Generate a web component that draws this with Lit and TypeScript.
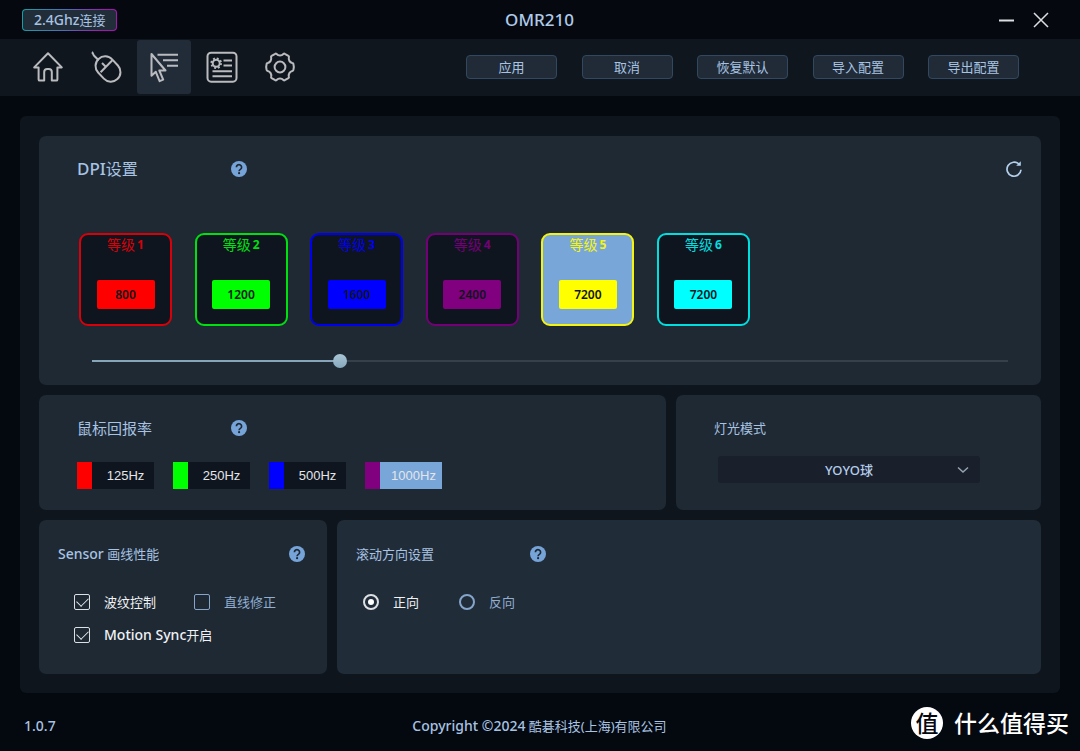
import { LitElement, html, css, svg } from "lit";
import { customElement, property, state } from "lit/decorators.js";
import { classMap } from "lit/directives/class-map.js";
import { styleMap } from "lit/directives/style-map.js";

const NAV = [
  {
    id: "home",
    label: "主页",
    icon: svg`<path d="M2.200 16.400 16 2.300l13.800 14.100h-4.400v12a1.200 1.200 0 0 1-1.200 1.200h-4.400V21a3 3 0 0 0-3-3h-1.600a3 3 0 0 0-3 3v8.600H7.800a1.200 1.200 0 0 1-1.200-1.200v-12z"/>`,
  },
  {
    id: "mouse",
    label: "鼠标",
    icon: svg`<path d="M1.800 1.200c1.500.6 1.100 2.400 2.300 3.500l4.600 4.600"/><rect x="8.400" y="4.200" width="19.200" height="27.600" rx="9.600" transform="rotate(-43 18 18)"/><path d="M10.600 21.200 22.600 9"/><path d="m12 12 4 4"/>`,
  },
  {
    id: "dpi",
    label: "DPI",
    icon: svg`<path d="M3.500 3v21.800l4.300-4 3.800 9.400 3.600-1.500-3.900-9.200h6.200z"/><path d="M9.500 3.800H30M15 9.300h15M19 14.800h11"/>`,
  },
  {
    id: "config",
    label: "配置",
    icon: svg`<rect x="1.500" y="1.700" width="29" height="29" rx="3.600"/><circle cx="10.200" cy="12.200" r="3.500"/><circle cx="10.200" cy="12.200" r="4.900" stroke-dasharray="1.900 1.950" stroke-width="1.800"/><path d="M17.500 9.600h8.500M17.500 14.600h8.500M6.500 20.300h19.500M6.500 25.300h19.500"/>`,
  },
  {
    id: "settings",
    label: "设置",
    icon: svg`<circle cx="16" cy="16" r="5.400"/><path d="M11.200 2.800c.5-.4 1-.2 1.400.2a4.600 4.600 0 0 0 6.800 0c.4-.4.9-.6 1.400-.2l3.600 2.100c.6.300.7.800.5 1.400a4.600 4.600 0 0 0 3.400 5.700c.6.100 1 .500 1.100 1.100.600 1.900.600 3.900 0 5.800-.1.600-.5 1-1.100 1.100a4.600 4.600 0 0 0-3.400 5.700c.2.600.1 1.100-.5 1.400l-3.600 2.100c-.5.4-1 .2-1.400-.2a4.600 4.600 0 0 0-6.800 0c-.4.4-.9.6-1.400.2l-3.600-2.100c-.6-.3-.7-.8-.5-1.400A4.600 4.600 0 0 0 3.700 20c-.6-.1-1-.5-1.100-1.100a9.800 9.800 0 0 1 0-5.800c.1-.6.5-1 1.100-1.100a4.600 4.600 0 0 0 3.400-5.700c-.2-.6-.1-1.100.5-1.400z"/>`,
  },
];

const LEVELS = [
  { dpi: 800, color: "#ff0000", edge: "#d80009" },
  { dpi: 1200, color: "#00ff00", edge: "#00e010" },
  { dpi: 1600, color: "#0000ff", edge: "#0000f0" },
  { dpi: 2400, color: "#800080", edge: "#740078" },
  { dpi: 7200, color: "#ffff00", edge: "#f4f410" },
  { dpi: 7200, color: "#00ffff", edge: "#00dfe0" },
];

const RATES = [
  { hz: 125, color: "#ff0000" },
  { hz: 250, color: "#00ff00" },
  { hz: 500, color: "#0000ff" },
  { hz: 1000, color: "#800080" },
];

const DPI_MIN = 100;
const DPI_MAX = 26700;

@customElement("help-button")
export class HelpButton extends LitElement {
  static styles = css`
    :host { display: flex; }
    .help { width: 16px; height: 16px; padding: 0; border: 0; background: none; cursor: pointer; }
    .glyph { display: block; width: 16px; height: 16px; }
  `;

  @property() topic = "";

  render() {
    return html`<button class="help" aria-label=${this.topic + "帮助"}>
      <svg class="glyph" viewBox="0 0 16 16" aria-hidden="true">
        <circle cx="8" cy="8" r="8" fill="#76a4d8" />
        <path d="M5.400 6.300a2.600 2.600 0 1 1 4 2.100c-.9.6-1.300.9-1.300 1.900" fill="none" stroke="#1e2934" stroke-width="1.700" />
        <circle cx="8.100" cy="12.200" r="1.100" fill="#1e2934" />
      </svg>
    </button>`;
  }
}

@customElement("app-root")
export class AppRoot extends LitElement {
  static styles = css`
    :host {
      display: flex;
      flex-direction: column;
      min-height: 100vh;
      box-sizing: border-box;
      background: #04080f;
      color: #a8c3e2;
      font: 400 13px/20px "Noto Sans", "Noto Sans CJK SC", sans-serif;
    }
    * { box-sizing: border-box; }
    button, input, select { font: inherit; color: inherit; margin: 0; }
    button { cursor: pointer; }
    h1, h2, p { margin: 0; font-weight: 400; }
    .latin { font-size: 14px; font-weight: 500; }

    .titlebar {
      display: grid;
      grid-template-columns: 1fr auto 1fr;
      align-items: center;
      height: 39px;
      padding: 0 31px 0 22px;
      background: #05090f;
    }
    .link-state {
      justify-self: start;
      height: 22px;
      padding: 0 11px;
      border: 1px solid transparent;
      border-radius: 4px;
      background:
        linear-gradient(#222d3a, #222d3a) padding-box,
        linear-gradient(100deg, #16a0a4, #4c6fb4 45%, #a814b4 85%) border-box;
    }
    .title { padding-left: 8px; font-size: 17px; font-weight: 500; color: #b0cbea; }
    .window-buttons { display: flex; gap: 18px; justify-self: end; }
    .window-button { padding: 0; border: 0; background: none; height: 16px; }
    .window-icon { display: block; width: 16px; height: 16px; fill: none; stroke: #dcdfe2; stroke-width: 1.500; }

    .toolbar {
      display: flex;
      justify-content: space-between;
      align-items: center;
      height: 57px;
      padding: 0 61px 1px 21px;
      background: #10161e;
    }
    .nav { display: flex; gap: 4px; }
    .nav-item {
      display: grid;
      place-items: center;
      width: 54px;
      height: 54px;
      border-radius: 3px;
    }
    .nav-item.active { background: #212c38; }
    .nav-icon {
      width: 32px;
      height: 32px;
      fill: none;
      stroke: #b9bbbe;
      stroke-width: 2;
      stroke-linejoin: round;
    }
    .actions { display: flex; justify-content: space-between; width: 553px; }
    .action {
      width: 91px;
      height: 24px;
      padding: 0;
      border: 1px solid #314860;
      border-radius: 4px;
      background: #202b37;
    }

    .panel {
      display: flex;
      flex-direction: column;
      gap: 10px;
      margin: 20px 20px 0;
      padding: 20px 19px 19px;
      border-radius: 6px;
      background: #0e151c;
    }
    .row { display: grid; gap: 10px; }
    .row.rate { grid-template-columns: 627fr 365fr; }
    .row.extras { grid-template-columns: 288fr 704fr; }
    .card { border-radius: 7px; background: #1e2934; padding: 23px 38px 21px; }
    .card.dpi { padding: 23px 18px 16px 38px; }
    .card.small { padding: 24px 22px 29px 19px; }
    .card.scroll { background: #212c39; }

    .head { display: flex; align-items: center; height: 20px; }
    .heading { font-size: 13px; flex: 0 0 154px; }
    .heading.large { font-size: 16px; }
    .heading.large .latin { font-size: 17px; }
    .heading.medium { font-size: 15px; }
    .card.sensor .head { justify-content: space-between; }
    .card.sensor .heading { flex: none; }
    .card.scroll .heading { flex-basis: 174px; }
    .reset { margin-left: auto; padding: 0; border: 0; background: none; }
    .reset-icon { display: block; width: 18px; height: 18px; }

    .levels {
      display: flex;
      justify-content: space-between;
      width: 671px;
      margin: 54px 0 27px 2px;
    }
    .level {
      display: flex;
      flex-direction: column;
      align-items: center;
      gap: 25px;
      width: 93px;
      height: 93px;
      border: 2px solid;
      border-radius: 9px;
      background: #0f151e;
    }
    .level.active { background: #79a6d9; }
    .level-name {
      padding: 0;
      border: 0;
      background: none;
      height: 20px;
      font-size: 14px;
      display: flex;
      gap: 2px;
    }
    .level-number { font-weight: 700; font-size: 12px; }
    .level-value {
      width: 58px;
      height: 29px;
      padding: 0;
      border: 0;
      border-radius: 2px;
      text-align: center;
      font-size: 12px;
      font-weight: 600;
      color: #10151d;
    }

    .slider {
      appearance: none;
      display: block;
      width: calc(100% - 30px);
      height: 16px;
      margin: 0 0 0 15px;
      background:
        linear-gradient(#86a5b8, #86a5b8) left center / var(--fill) 2px no-repeat,
        linear-gradient(#34404c, #34404c) center / 100% 2px no-repeat;
    }
    .slider::-webkit-slider-thumb {
      appearance: none;
      width: 14px;
      height: 14px;
      border-radius: 50%;
      background: linear-gradient(#a9c5d5, #86a8bc);
    }

    .rates { display: flex; gap: 19px; margin-top: 24px; }
    .rate-option {
      display: flex;
      width: 77px;
      height: 27px;
      padding: 0;
      border: 0;
      background: #0f151e;
      color: #e3e5e8;
      font: 13px/27px "Liberation Sans", sans-serif;
    }
    .rate-option.active { background: #79a6d9; }
    .swatch { width: 15px; height: 27px; }
    .rate-text { flex: 1; padding-left: 5px; text-align: center; }

    .select-wrap { display: grid; margin: 18px 23px 0 4px; align-items: center; }
    .select, .chevron { grid-area: 1 / 1; }
    .select {
      appearance: none;
      width: 100%;
      height: 27px;
      padding: 0;
      border: 0;
      border-radius: 3px;
      background: #191f2b;
      text-align: center;
      text-align-last: center;
      font-weight: 500;
      color: #b4cdea;
    }
    .chevron { justify-self: end; width: 12px; height: 12px; margin-right: 11px; pointer-events: none; }

    .options { display: grid; grid-template-columns: 120px auto; justify-content: start; gap: 13px 0; margin: 28px 0 0 16px; }
    .options.scroll-options { grid-template-columns: 96px auto; margin-left: 7px; }
    .option { display: flex; align-items: center; gap: 14px; height: 20px; white-space: nowrap; color: #91aed0; }
    .option.on { color: #f0f2f4; }
    .tick, .dot {
      appearance: none;
      flex: none;
      display: grid;
      place-items: center;
      width: 16px;
      height: 16px;
      border: 1px solid #86a5ca;
      border-radius: 2px;
      outline: 0;
    }
    .tick:checked { border-color: #dde0e3; }
    .tick:checked::before {
      content: "";
      width: 10px;
      height: 6px;
      margin-top: -3px;
      border: solid #e6e8ea;
      border-width: 0 0 1px 1px;
      rotate: -45deg;
    }
    .dot { border-width: 2px; border-radius: 50%; }
    .dot:checked { border-color: #dde0e3; }
    .dot:checked::before { content: ""; width: 6px; height: 6px; border-radius: 50%; background: #fff; }

    .footer {
      display: grid;
      grid-template-columns: 1fr auto 1fr;
      align-items: center;
      flex: 1;
      min-height: 58px;
      padding: 8px 11px 0 24px;
    }
    .copyright { padding-right: 14px; }
    .brand {
      display: flex;
      justify-self: end;
      align-items: center;
      gap: 11px;
      margin-bottom: 6px;
      color: #fff;
      font-size: 23px;
      font-weight: 500;
      line-height: 31px;
    }
    .brand-mark {
      display: grid;
      place-items: center;
      width: 32px;
      height: 32px;
      border-radius: 50%;
      background: #fff;
      color: #05090f;
    }
  `;

  @state() private page = "dpi";
  @state() private level = 4;
  @state() private rate = 1000;
  @state() private values = LEVELS.map((l) => l.dpi);
  @state() private ripple = true;
  @state() private straight = false;
  @state() private motion = true;
  @state() private direction = "forward";

  private setValue(index: number, value: number) {
    this.values = this.values.map((v, i) => (i === index ? value : v));
  }

  private renderLevels() {
    return LEVELS.map(
      (l, i) => html`<div
        class=${classMap({ level: true, active: i === this.level })}
        style=${styleMap({ color: l.edge, borderColor: l.edge })}
      >
        <button class="level-name" aria-pressed=${i === this.level} @click=${() => (this.level = i)}>
          <span>等级</span><span class="level-number">${i + 1}</span>
        </button>
        <input
          class="level-value"
          type="text"
          aria-label=${"等级" + (i + 1) + " DPI"}
          style=${styleMap({ background: l.color })}
          .value=${String(this.values[i])}
          @change=${(e: Event) => this.setValue(i, Number((e.target as HTMLInputElement).value) || DPI_MIN)}
        />
      </div>`
    );
  }

  private renderTick(label: unknown, on: boolean, change: (v: boolean) => void) {
    return html`<label class=${classMap({ option: true, on })}>
      <input class="tick" type="checkbox" .checked=${on}
        @change=${(e: Event) => change((e.target as HTMLInputElement).checked)} />
      <span>${label}</span>
    </label>`;
  }

  private renderDirection(label: string, value: string) {
    const on = this.direction === value;
    return html`<label class=${classMap({ option: true, on })}>
      <input class="dot" type="radio" name="direction" .checked=${on} @change=${() => (this.direction = value)} />
      <span>${label}</span>
    </label>`;
  }

  render() {
    const current = this.values[this.level];
    const fill = ((current - DPI_MIN) / (DPI_MAX - DPI_MIN)) * 100 + "%";
    return html`
      <header class="titlebar">
        <span class="link-state"><span class="latin">2.4Ghz</span>连接</span>
        <h1 class="title">OMR210</h1>
        <div class="window-buttons">
          <button class="window-button" aria-label="最小化">
            <svg class="window-icon" viewBox="0 0 16 16"><path d="M0 8.500h15" stroke-width="2" /></svg>
          </button>
          <button class="window-button" aria-label="关闭">
            <svg class="window-icon" viewBox="0 0 16 16"><path d="m1 1 14 14M15 1 1 15" /></svg>
          </button>
        </div>
      </header>

      <div class="toolbar">
        <nav class="nav">
          ${NAV.map(
            (n) => html`<a
              class=${classMap({ "nav-item": true, active: n.id === this.page })}
              href=${"#" + n.id}
              aria-label=${n.label}
              @click=${() => (this.page = n.id)}
              ><svg class="nav-icon" viewBox="0 0 32 32" aria-hidden="true">${n.icon}</svg></a
            >`
          )}
        </nav>
        <div class="actions">
          ${["应用", "取消", "恢复默认", "导入配置", "导出配置"].map((t) => html`<button class="action">${t}</button>`)}
        </div>
      </div>

      <main class="panel">
        <section class="card dpi">
          <div class="head">
            <h2 class="heading large"><span class="latin">DPI</span>设置</h2>
            <help-button topic="DPI设置"></help-button>
            <button class="reset" aria-label="重置">
              <svg class="reset-icon" viewBox="0 0 18 18" fill="none" stroke="#b4d0ec" stroke-width="1.700">
                <path d="M14 4.300A7 7 0 1 0 16 9.800" />
                <path d="M15.800 1.200v4.600h-4.600z" fill="#b4d0ec" stroke="none" />
              </svg>
            </button>
          </div>
          <div class="levels">${this.renderLevels()}</div>
          <input
            class="slider"
            type="range"
            aria-label="DPI"
            min=${DPI_MIN}
            max=${DPI_MAX}
            step="50"
            style=${styleMap({ "--fill": fill })}
            .value=${String(current)}
            @input=${(e: Event) => this.setValue(this.level, Number((e.target as HTMLInputElement).value))}
          />
        </section>

        <div class="row rate">
          <section class="card">
            <div class="head">
              <h2 class="heading medium">鼠标回报率</h2>
              <help-button topic="鼠标回报率"></help-button>
            </div>
            <div class="rates">
              ${RATES.map(
                (r) => html`<button
                  class=${classMap({ "rate-option": true, active: r.hz === this.rate })}
                  aria-pressed=${r.hz === this.rate}
                  @click=${() => (this.rate = r.hz)}
                >
                  <span class="swatch" style=${styleMap({ background: r.color })}></span>
                  <span class="rate-text">${r.hz}Hz</span>
                </button>`
              )}
            </div>
          </section>
          <section class="card">
            <div class="head"><h2 class="heading" id="light">灯光模式</h2></div>
            <div class="select-wrap">
              <select class="select" aria-labelledby="light">
                <option>YOYO球</option>
              </select>
              <svg class="chevron" viewBox="0 0 12 12" fill="none" stroke="#96a3b3" stroke-width="1.500" aria-hidden="true">
                <path d="m1 3.500 5 4.500 5-4.500" />
              </svg>
            </div>
          </section>
        </div>

        <div class="row extras">
          <section class="card small sensor">
            <div class="head">
              <h2 class="heading"><span class="latin">Sensor</span> 画线性能</h2>
              <help-button topic="Sensor 画线性能"></help-button>
            </div>
            <div class="options">
              ${this.renderTick("波纹控制", this.ripple, (v) => (this.ripple = v))}
              ${this.renderTick("直线修正", this.straight, (v) => (this.straight = v))}
              ${this.renderTick(
                html`<span class="latin">Motion Sync</span>开启`,
                this.motion,
                (v) => (this.motion = v)
              )}
            </div>
          </section>
          <section class="card small scroll">
            <div class="head">
              <h2 class="heading">滚动方向设置</h2>
              <help-button topic="滚动方向设置"></help-button>
            </div>
            <div class="options scroll-options">
              ${this.renderDirection("正向", "forward")} ${this.renderDirection("反向", "reverse")}
            </div>
          </section>
        </div>
      </main>

      <footer class="footer">
        <span class="latin">1.0.7</span>
        <p class="copyright"><span class="latin">Copyright ©2024</span> 酷碁科技(上海)有限公司</p>
        <div class="brand"><span class="brand-mark">值</span><span>什么值得买</span></div>
      </footer>
    `;
  }
}
